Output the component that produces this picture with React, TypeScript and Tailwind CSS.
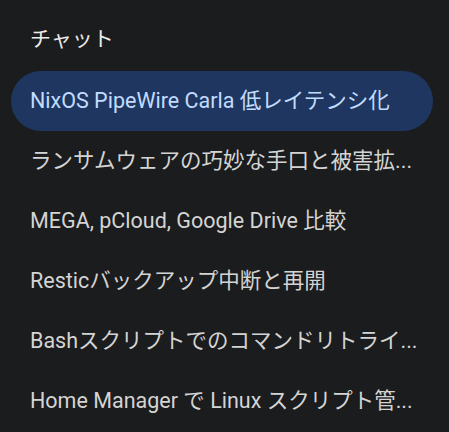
const chats = [
  "NixOS PipeWire Carla 低レイテンシ化",
  "ランサムウェアの巧妙な手口と被害拡...",
  "MEGA, pCloud, Google Drive 比較",
  "Resticバックアップ中断と再開",
  "Bashスクリプトでのコマンドリトライ...",
  "Home Manager で Linux スクリプト管...",
]

export default function App() {
  return (
    <div
      className="w-[449px] h-[432px] overflow-hidden bg-[#1b1c1d] pl-[11px] pr-[16px] pt-[25px]"
      style={{ fontFamily: 'Roboto, "Noto Sans CJK JP", sans-serif' }}
    >
      <div className="h-[30px] mb-[16px] pl-[19px] flex items-center text-[21px] text-[#ececec]">
        チャット
      </div>
      <ul className="flex flex-col">
        {chats.map((title, i) => (
          <li
            key={title}
            className={
              i === 0
                ? "h-[60px] rounded-full bg-[#1f3760] text-[#c2dcff] flex items-center pl-[19px] pr-[20px]"
                : "h-[60px] rounded-full text-[#d4d4d4] flex items-center pl-[19px] pr-[20px]"
            }
          >
            <span className="whitespace-nowrap text-[21.5px] leading-normal">{title}</span>
          </li>
        ))}
      </ul>
    </div>
  )
}
